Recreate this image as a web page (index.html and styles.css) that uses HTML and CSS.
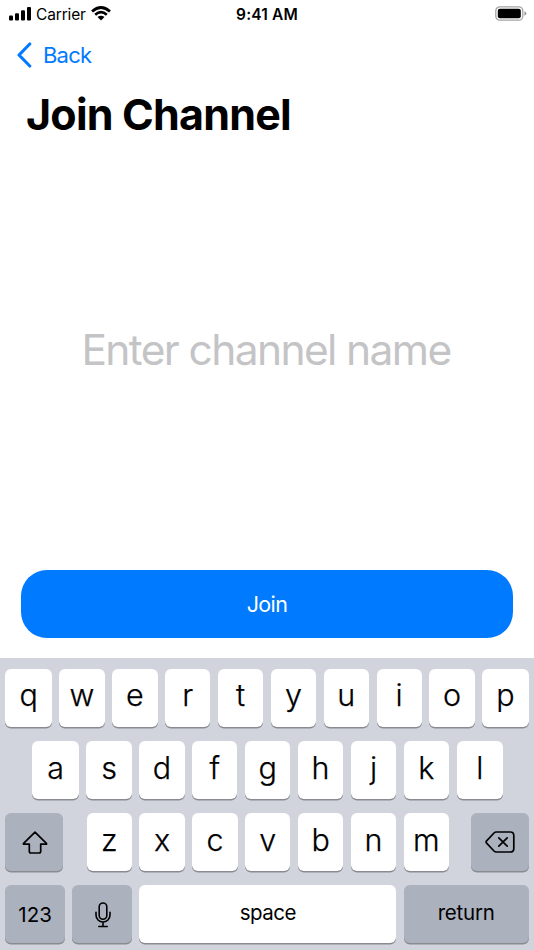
FILE: index.html
```html
<!DOCTYPE html>
<html lang="en">
<head>
<meta charset="utf-8">
<title>Join Channel</title>
<link rel="stylesheet" href="styles.css">
</head>
<body>
<div class="screen">
  <header class="status">
    <div class="carrier">
      <svg class="signal" width="23" height="14" viewBox="0 0 23 14"><rect x="0" y="8.6" width="4" height="4.9" rx="1.1"/><rect x="6" y="6.2" width="4" height="7.3" rx="1.1"/><rect x="12" y="3.2" width="4" height="10.3" rx="1.1"/><rect x="18" y="0" width="4" height="13.5" rx="1.1"/></svg>
      <span class="carrier-name">Carrier</span>
      <svg class="wifi" width="20" height="15" viewBox="0 0 20 15"><g fill="none" stroke="#000" stroke-width="2.7"><path d="M1 5.4Q10-2.4 19 5.4"/><path d="M4.2 8.8Q10 3.6 15.8 8.8"/></g><path d="M6.5 11.1Q10 8.2 13.5 11.1L10 14.6Z"/></svg>
    </div>
    <time class="clock">9:41 AM</time>
    <svg class="battery" width="32" height="15" viewBox="0 0 32 15"><rect x=".8" y=".8" width="27" height="13.4" rx="4" fill="none" stroke="#a3a3a3" stroke-width="1.3"/><rect x="2.8" y="2.8" width="23" height="9.4" rx="2"/><path d="M29.4 5.2q2 .7 2 2.3t-2 2.3z" fill="#999"/></svg>
  </header>
  <nav class="nav">
    <svg class="chevron" width="16" height="26" viewBox="0 0 16 26"><path d="M13.8 2 3 13l10.8 11" fill="none" stroke="#007aff" stroke-width="3.1" stroke-linecap="round" stroke-linejoin="round"/></svg>
    <span class="back">Back</span>
  </nav>
  <h1 class="title">Join Channel</h1>
  <main class="entry"><span class="placeholder">Enter channel name</span></main>
  <div class="join"><span>Join</span></div>
  <section class="keyboard">
    <div class="row row-top"><b class="key">q</b><b class="key">w</b><b class="key">e</b><b class="key">r</b><b class="key">t</b><b class="key">y</b><b class="key">u</b><b class="key">i</b><b class="key">o</b><b class="key">p</b></div>
    <div class="row row-home"><b class="key">a</b><b class="key">s</b><b class="key">d</b><b class="key">f</b><b class="key">g</b><b class="key">h</b><b class="key">j</b><b class="key">k</b><b class="key">l</b></div>
    <div class="row row-low">
      <b class="key dark shift"><svg width="26" height="24" viewBox="0 0 26 24"><path d="M13 1.2 24.4 12.4Q25 13.2 24 13.2H18.7V20.3Q18.7 22 17 22H9Q7.3 22 7.3 20.3V13.2H2Q1 13.2 1.6 12.4Z" fill="none" stroke="#000" stroke-width="1.7" stroke-linejoin="round"/></svg></b>
      <b class="key">z</b><b class="key">x</b><b class="key">c</b><b class="key">v</b><b class="key">b</b><b class="key">n</b><b class="key">m</b>
      <b class="key dark delete"><svg width="30" height="22" viewBox="0 0 30 22"><g fill="none" stroke="#000" stroke-width="1.7" stroke-linecap="round" stroke-linejoin="round"><path d="M11.3 1H25.2Q28.8 1 28.8 4.6V17.4Q28.8 21 25.2 21H11.3Q10 21 9 20L1.6 12.2Q.6 11 1.6 9.8L9 2Q10 1 11.3 1Z"/><path d="m13.8 6.8 8.4 8.4M22.2 6.8l-8.4 8.4"/></g></svg></b>
    </div>
    <div class="row row-bottom">
      <b class="key dark numbers">123</b>
      <b class="key dark mic"><svg width="16" height="26" viewBox="0 0 16 26"><g fill="none" stroke="#000" stroke-width="1.6" stroke-linecap="round"><rect x="4.2" y="1" width="7.6" height="16.2" rx="3.8"/><path d="M1 10.2V13a7 7 0 0 0 14 0v-2.8M8 20.3v4M3.8 24.5h8.4"/></g></svg></b>
      <b class="key space">space</b>
      <b class="key dark return">return</b>
    </div>
  </section>
</div>
</body>
</html>
```
FILE: styles.css
```css
* { box-sizing: border-box; }
body { margin: 0; background: #fff; color: #000; font-family: Inter, "Liberation Sans", sans-serif; }
svg { display: block; flex: none; }
.screen { width: 534px; height: 950px; display: flex; flex-direction: column; overflow: hidden; }
.status { height: 28px; padding: 0 7px 1px 9px; display: grid; grid-template-columns: 1fr auto 1fr; align-items: center; }
.carrier { display: flex; align-items: center; }
.carrier-name { font-size: 15.5px; margin-left: 4px; letter-spacing: -.15px; padding-top: 1px; }
.wifi { margin-left: 5.5px; }
.clock { font-size: 15.5px; font-weight: 600; letter-spacing: .15px; margin-right: 2px; padding-top: 1px; }
.battery { justify-self: end; }
.nav { height: 53px; display: flex; align-items: center; padding-left: 16px; color: #007aff; }
.chevron { margin-top: 1px; }
.back { font-size: 22px; margin-left: 11px; letter-spacing: -.8px; padding-top: 1px; }
.title { margin: 0; height: 67px; padding-left: 26px; line-height: 66px; font-size: 43px; font-weight: 700; letter-spacing: -.8px; }
.entry { height: 422px; display: flex; justify-content: center; padding-top: 169px; }
.placeholder { font-size: 42.5px; line-height: 66px; font-weight: 400; color: #c4c4c6; white-space: nowrap; letter-spacing: -1.62px; margin-right: 2px; }
.join { height: 67.5px; margin: 0 21px 20.5px; border-radius: 26px; background: #007aff; color: #fff; display: flex; align-items: center; justify-content: center; font-size: 21.5px; font-weight: 400; letter-spacing: -.6px; }
.keyboard { height: 292px; background: #d1d4dc; padding: 10.5px 5.4px 0; display: flex; flex-direction: column; gap: 14.2px; }
.row { display: flex; gap: 7.6px; height: 58px; }
.key { flex: 1 1 0; min-width: 0; height: 58px; display: flex; align-items: center; justify-content: center; background: #fff; border-radius: 6px; box-shadow: 0 1.5px 0 #898b90; font-size: 30.5px; font-weight: 300; line-height: 52px; padding: 0 0 5.5px; -webkit-text-stroke: .25px #000; }
.dark { background: #abb1bd; padding-bottom: 0; }
.row-top .key:first-child, .row-top .key:last-child { flex: 0 0 46.4px; }
.row-home { padding: 0 25.6px 0 27px; }
.row-home .key:first-child, .row-home .key:last-child { flex: 0 0 46.4px; }
.row-home .key, .row-low .key { padding-bottom: 4px; }
.row-low .shift { flex: 0 0 58px; margin-right: 15.6px; padding: 2px 0 0 2px; }
.row-low .delete { flex: 0 0 58px; margin-left: 14px; padding: 1px 0 0; }
.numbers, .mic { flex: 0 0 59.4px; }
.return { flex: 0 0 124.8px; }
.numbers, .space, .return { font-size: 20.5px; font-weight: 400; -webkit-text-stroke: 0; }
.numbers { padding-top: 1px; }
.space { letter-spacing: -.5px; padding-bottom: 3px; }
.return { padding-bottom: 3px; letter-spacing: -.2px; }
.mic { padding: 2px 0 0 1px; }
```
